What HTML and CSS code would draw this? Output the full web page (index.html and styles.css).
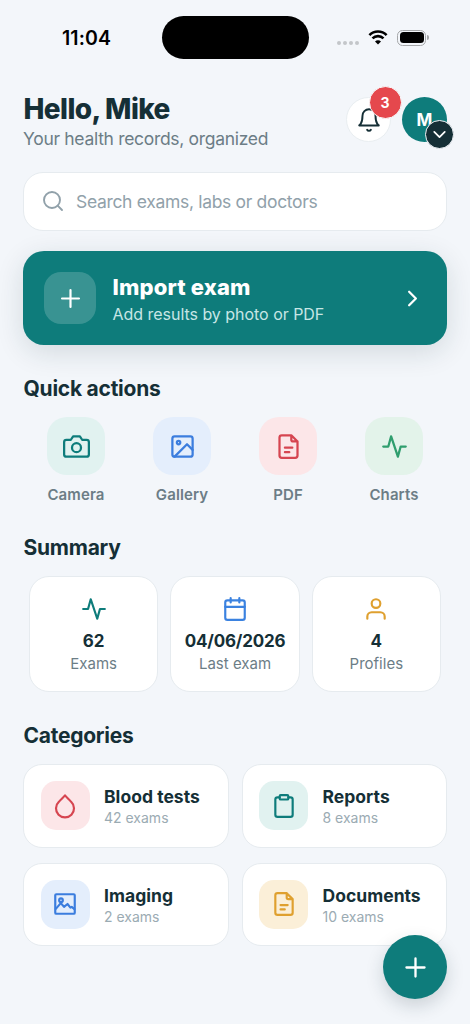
FILE: index.html
```html
<!DOCTYPE html>
<html lang="en">
<head>
<meta charset="utf-8">
<meta name="viewport" content="width=device-width, initial-scale=1">
<title>Health records</title>
<link rel="stylesheet" href="styles.css">
</head>
<body>
<svg class="defs" aria-hidden="true">
  <symbol id="i-bell" viewBox="0 0 24 24"><path d="M18 8A6 6 0 0 0 6 8c0 7-3 9-3 9h18s-3-2-3-9M13.73 21a2 2 0 0 1-3.46 0"/></symbol>
  <symbol id="i-search" viewBox="0 0 24 24"><circle cx="11" cy="11" r="8"/><path d="M21 21l-4.35-4.35"/></symbol>
  <symbol id="i-plus" viewBox="0 0 24 24"><path d="M12 5v14M5 12h14"/></symbol>
  <symbol id="i-right" viewBox="0 0 24 24"><path d="M9 18l6-6-6-6"/></symbol>
  <symbol id="i-down" viewBox="0 0 24 24"><path d="M6 9l6 6 6-6"/></symbol>
  <symbol id="i-camera" viewBox="0 0 24 24"><path d="M23 19a2 2 0 0 1-2 2H3a2 2 0 0 1-2-2V8a2 2 0 0 1 2-2h4l2-3h6l2 3h4a2 2 0 0 1 2 2z"/><circle cx="12" cy="13" r="4"/></symbol>
  <symbol id="i-image" viewBox="0 0 24 24"><rect x="3" y="3" width="18" height="18" rx="2"/><circle cx="8.5" cy="8.5" r="1.5"/><path d="M21 15l-5-5L5 21"/></symbol>
  <symbol id="i-file" viewBox="0 0 24 24"><path d="M14.5 2H6a2 2 0 0 0-2 2v16a2 2 0 0 0 2 2h12a2 2 0 0 0 2-2V7.5zM14.5 2v4a1.5 1.5 0 0 0 1.5 1.5h4M15.4 13H8.8M12.7 17H8.800"/></symbol>
  <symbol id="i-activity" viewBox="0 0 24 24"><path d="M22 12h-4.5l-2.5 9L9 3l-2.5 9H2"/></symbol>
  <symbol id="i-calendar" viewBox="0 0 24 24"><rect x="3" y="4" width="18" height="18" rx="2"/><path d="M16 2v4M8 2v4M3 10h18"/></symbol>
  <symbol id="i-user" viewBox="0 0 24 24"><path d="M20 21v-2a4 4 0 0 0-4-4H8a4 4 0 0 0-4 4v2"/><circle cx="12" cy="7" r="4"/></symbol>
  <symbol id="i-drop" viewBox="0 0 24 24"><path d="M12 2.2c1.500 1.900 3.800 3.700 5.660 5.950a8.300 8.300 0 1 1-11.320 0C8.200 5.900 10.500 4.100 12 2.200z"/></symbol>
  <symbol id="i-clip" viewBox="0 0 24 24"><path d="M16 4h2a2 2 0 0 1 2 2v14a2 2 0 0 1-2 2H6a2 2 0 0 1-2-2V6a2 2 0 0 1 2-2h2"/><rect x="8" y="2" width="8" height="4" rx="1"/></symbol>
  <symbol id="i-scan" viewBox="0 0 24 24"><rect x="3" y="3" width="18" height="18" rx="1"/><circle cx="8.3" cy="8.5" r="1.7"/><path d="M3.5 16.5l4.600-5.300 3 3.400 3.200-2.600 2.700 3.300 1.200-.6 2.500 2"/></symbol>
</svg>

<div class="screen">
  <div class="status">
    <div class="time">11:04</div>
    <div class="island"></div>
    <div class="signals">
      <div class="dots"><i></i><i></i><i></i><i></i></div>
      <svg class="wifi" viewBox="0 0 20 15"><path d="M1.4 5.1a12.2 12.2 0 0 1 17.2 0M4.5 8.4a7.8 7.8 0 0 1 11 0"/><path class="solid" d="M10 14.6l-3-3.1a4.2 4.2 0 0 1 6 0z"/></svg>
      <div class="battery"><div class="cell"><b></b></div><u></u></div>
    </div>
  </div>

  <header class="header">
    <div>
      <h1 class="hello">Hello, Mike</h1>
      <p class="tagline">Your health records, organized</p>
    </div>
    <div class="tools">
      <div class="bell"><svg class="icon"><use href="#i-bell"/></svg><span class="count">3</span></div>
      <div class="avatar">M<span class="more"><svg class="icon"><use href="#i-down"/></svg></span></div>
    </div>
  </header>

  <div class="search"><svg class="icon"><use href="#i-search"/></svg><span>Search exams, labs or doctors</span></div>

  <div class="import">
    <div class="plus"><svg class="icon"><use href="#i-plus"/></svg></div>
    <div class="copy">
      <div class="import-title">Import exam</div>
      <div class="import-sub">Add results by photo or PDF</div>
    </div>
    <svg class="icon go"><use href="#i-right"/></svg>
  </div>

  <h2 class="h-quick">Quick actions</h2>
  <div class="quick">
    <div class="action"><div class="tile teal"><svg class="icon"><use href="#i-camera"/></svg></div><span>Camera</span></div>
    <div class="action"><div class="tile blue"><svg class="icon"><use href="#i-image"/></svg></div><span>Gallery</span></div>
    <div class="action"><div class="tile red"><svg class="icon"><use href="#i-file"/></svg></div><span>PDF</span></div>
    <div class="action"><div class="tile green"><svg class="icon"><use href="#i-activity"/></svg></div><span>Charts</span></div>
  </div>

  <h2 class="h-summary">Summary</h2>
  <div class="summary">
    <div class="stat"><svg class="icon c-teal"><use href="#i-activity"/></svg><strong>62</strong><span>Exams</span></div>
    <div class="stat"><svg class="icon c-blue"><use href="#i-calendar"/></svg><strong class="date">04/06/2026</strong><span>Last exam</span></div>
    <div class="stat"><svg class="icon c-gold"><use href="#i-user"/></svg><strong>4</strong><span>Profiles</span></div>
  </div>

  <h2 class="h-cats">Categories</h2>
  <div class="cats">
    <div class="cat"><div class="tile red"><svg class="icon"><use href="#i-drop"/></svg></div><div><div class="name">Blood tests</div><div class="num">42 exams</div></div></div>
    <div class="cat"><div class="tile teal"><svg class="icon"><use href="#i-clip"/></svg></div><div><div class="name">Reports</div><div class="num">8 exams</div></div></div>
    <div class="cat"><div class="tile blue"><svg class="icon"><use href="#i-scan"/></svg></div><div><div class="name">Imaging</div><div class="num">2 exams</div></div></div>
    <div class="cat"><div class="tile gold"><svg class="icon"><use href="#i-file"/></svg></div><div><div class="name">Documents</div><div class="num">10 exams</div></div></div>
  </div>

  <div class="fab"><svg class="icon"><use href="#i-plus"/></svg></div>
</div>
</body>
</html>
```
FILE: styles.css
```css
* { box-sizing: border-box; }
body { margin: 0; background: #f3f6fa; font-family: Inter, "Liberation Sans", sans-serif; color: #152f36; }
h1, h2, p { margin: 0; }
.defs { position: absolute; width: 0; height: 0; }
.icon { display: block; flex: none; fill: none; stroke: currentColor; stroke-width: 2; stroke-linecap: round; stroke-linejoin: round; width: 27px; height: 27px; }
.screen { position: relative; width: 470px; height: 1024px; overflow: hidden; padding: 0 23px; white-space: nowrap; }

.status { display: grid; grid-template-columns: 138.5px 147px 1fr; height: 92px; padding-top: 16px; color: #000; }
.time { padding-left: 39px; font-size: 19.5px; font-weight: 600; line-height: 45px; letter-spacing: 0.1px; }
.island { height: 43px; border-radius: 22px; background: #000; }
.signals { display: flex; align-items: center; height: 43px; padding-left: 28.5px; }
.dots { display: flex; gap: 2px; padding-top: 11px; }
.dots i { width: 4px; height: 4px; border-radius: 50%; background: #c3c6c9; }
.wifi { width: 20px; height: 15px; margin-left: 9px; fill: none; stroke: #000; stroke-width: 2.6; }
.wifi .solid { fill: #000; stroke: none; }
.battery { display: flex; align-items: center; gap: 1px; margin-left: 9px; }
.cell { width: 29px; height: 16px; padding: 1.5px; border: 1px solid #a5a7a9; border-radius: 5.5px; }
.cell b { display: block; height: 11px; border-radius: 3.5px; background: #000; }
.battery u { width: 2px; height: 5px; border-radius: 0 2px 2px 0; background: #a5a7a9; }

.header { display: flex; justify-content: space-between; height: 80px; }
.hello { padding-left: 0.5px; font-size: 28px; line-height: 34px; font-weight: 800; letter-spacing: -0.6px; }
.tagline { padding-top: 1px; font-size: 17.5px; line-height: 23px; color: #6c7d86; letter-spacing: -0.31px; }
.tools { display: flex; gap: 11px; padding-top: 5px; }
.bell { position: relative; display: grid; place-items: center; width: 45px; height: 45px; border-radius: 50%; background: #fff; border: 1px solid #e9eef1; }
.bell .icon { width: 26px; height: 26px; stroke-width: 1.8; }
.count { position: absolute; left: 21.5px; top: -12.5px; width: 33px; height: 33px; border-radius: 50%; border: 1.5px solid #f9fbfc; background: #e5484d; color: #fff; font-size: 14px; font-weight: 700; line-height: 31px; text-align: center; }
.avatar { position: relative; width: 45px; height: 45px; border-radius: 50%; background: #0e7c7b; color: #fff; font-size: 17px; font-weight: 700; line-height: 47px; text-align: center; }
.more { position: absolute; left: 23px; top: 23px; display: grid; place-items: center; width: 29px; height: 29px; border-radius: 50%; border: 1.5px solid #f3f6fa; background: #152f36; }
.more .icon { width: 21px; height: 21px; stroke-width: 2; }

.search { display: flex; align-items: center; gap: 11px; height: 59px; padding: 0 17px 1px; border: 1px solid #e6ebef; border-radius: 20px; background: #fff; color: #91a1aa; font-size: 17.5px; letter-spacing: -0.32px; }
.search .icon { width: 24px; height: 24px; stroke-width: 1.9; }

.import { display: flex; align-items: center; height: 94px; margin-top: 20px; padding: 0 21px; border-radius: 21px; background: #0e7c7b; color: #fff; box-shadow: 0 7px 28px rgba(20, 47, 54, .14); }
.plus { display: grid; place-items: center; width: 52px; height: 52px; border-radius: 17px; background: rgba(255, 255, 255, .18); }
.plus .icon { width: 29px; height: 29px; stroke-width: 1.8; }
.copy { flex: 1; padding-left: 16.5px; }
.import-title { padding-top: 1px; font-size: 22px; line-height: 27px; font-weight: 800; letter-spacing: 0.15px; }
.import-sub { font-size: 16px; line-height: 20px; padding-top: 3px; color: #c7e6e5; letter-spacing: -0.03px; }

h2 { padding-left: 0.5px; font-size: 21px; line-height: 26px; font-weight: 700; letter-spacing: -0.25px; }
.h-quick { margin-top: 31px; }
.h-summary { margin-top: 30px; }
.h-cats { margin-top: 31px; }

.tile { display: grid; place-items: center; flex: none; }
.teal { background: #e1f2f0; color: #0e7c7b; }
.blue { background: #e4eefc; color: #3b7dde; }
.red { background: #fce6e8; color: #d64550; }
.green { background: #e3f3ea; color: #2f9e6e; }
.gold { background: #fbefd8; color: #dfa02f; }
.c-teal { color: #0e7c7b; }
.c-blue { color: #3b82e0; }
.c-gold { color: #dfa02f; }

.quick { display: grid; grid-template-columns: repeat(4, 1fr); margin-top: 15px; }
.action { display: flex; flex-direction: column; align-items: center; gap: 10px; font-size: 15px; line-height: 20px; font-weight: 600; letter-spacing: 0.1px; color: #6c7d86; }
.action .tile { width: 58px; height: 58px; border-radius: 20px; }

.summary { display: grid; grid-template-columns: repeat(3, 1fr); gap: 12px; margin-top: 15px; padding: 0 6px; }
.stat { display: flex; flex-direction: column; align-items: center; height: 116px; padding-top: 19px; border: 1px solid #e6ebef; border-radius: 20px; background: #fff; }
.stat .icon { width: 26px; height: 26px; }
.stat strong { margin-top: 8px; font-size: 17px; line-height: 22px; font-weight: 700; }
.stat .date { letter-spacing: -0.2px; }
.stat span { font-size: 15px; line-height: 23px; color: #6c7d86; }

.cats { display: grid; grid-template-columns: 1fr 1fr; gap: 15px 13px; margin-top: 15px; }
.cat { display: flex; align-items: center; gap: 14.5px; height: 83.5px; padding-left: 16.5px; border: 1px solid #e6ebef; border-radius: 19px; background: #fff; }
.cat .tile { width: 49px; height: 49px; border-radius: 15px; }
.cat .icon { width: 26px; height: 26px; }
.name { padding-top: 2px; font-size: 17.5px; line-height: 23px; font-weight: 700; letter-spacing: 0.03px; }
.num { font-size: 14px; line-height: 20px; color: #9babb3; }

.fab { position: absolute; left: 383px; top: 935px; display: grid; place-items: center; width: 64px; height: 64px; border-radius: 50%; background: #0e7c7b; color: #fff; box-shadow: 0 7px 18px rgba(20, 47, 54, .18); }
.fab .icon { width: 31px; height: 31px; stroke-width: 1.8; }
```
